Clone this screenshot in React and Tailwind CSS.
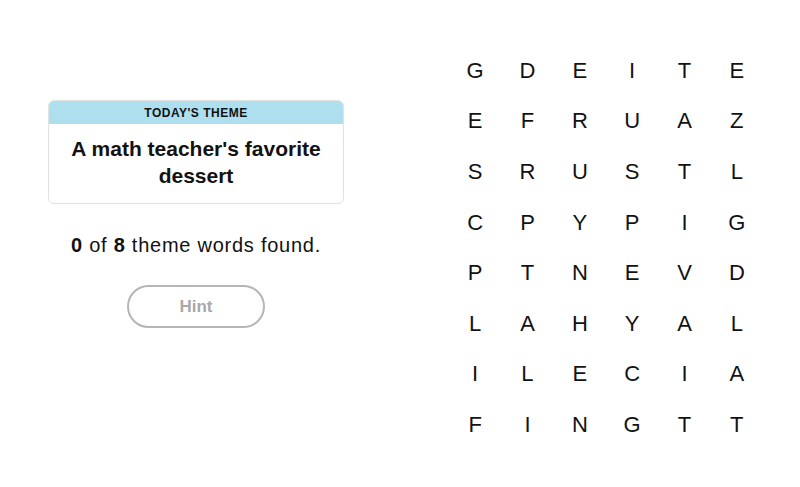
import React from 'react';

const rows = [
  'GDEITE',
  'EFRUAZ',
  'SRUSTL',
  'CPYPIG',
  'PTNEVD',
  'LAHYAL',
  'ILECIA',
  'FINGTT',
];

export default function App() {
  return (
    <div
      className="w-[800px] h-[487px] bg-white text-[#121212] flex items-start"
      style={{ fontFamily: '"Liberation Sans", Arial, sans-serif' }}
    >
      {/* --- LEFT PANEL --- */}
      <div className="ml-[48px] mt-[100px] w-[296px] flex flex-col items-center">
        <div className="w-full rounded-[6px] border border-[#e2e2e2] overflow-hidden">
          <div className="h-[23px] bg-[#aedfee] flex items-center justify-center text-[12px] font-bold tracking-[0.5px] uppercase">
            Today&apos;s Theme
          </div>
          <div className="px-2 pt-[11px] pb-[14px] text-center text-[21px] leading-[27px] font-bold">
            A math teacher&apos;s favorite dessert
          </div>
        </div>

        <p className="mt-[29px] text-[20px] leading-[24px] tracking-[0.75px]">
          <span className="font-bold">0</span> of <span className="font-bold">8</span> theme words found.
        </p>

        <button className="mt-[28px] w-[138px] h-[43px] rounded-full border-2 border-[#b5b5b5] text-[17px] font-bold text-[#a8a8a8]">
          Hint
        </button>
      </div>

      {/* --- LETTER GRID --- */}
      <div className="ml-[105px] mt-[45px] grid grid-cols-6 w-[314px]">
        {rows.map((row, r) =>
          row.split('').map((ch, c) => (
            <div
              key={`${r}-${c}`}
              className="h-[50.6px] flex items-center justify-center text-[22px]"
            >
              {ch}
            </div>
          ))
        )}
      </div>
    </div>
  );
}
